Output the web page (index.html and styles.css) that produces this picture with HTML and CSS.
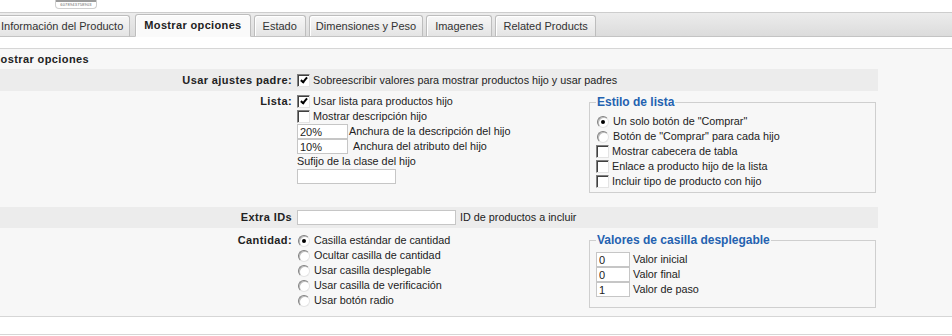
FILE: index.html
```html
<!DOCTYPE html>
<html lang="es">

<head>
  <meta charset="UTF-8">
  <meta name="viewport" content="width=device-width, initial-scale=1.0">
  <title>Mostrar opciones</title>
  <link rel="stylesheet" href="styles.css">
</head>

<body>
  <div class="logo"><span class="code">6078943758903</span></div>

  <div class="tabbar">
    <a class="tab tab-first">Información del Producto</a>
    <a class="tab tab-active">Mostrar opciones</a>
    <a class="tab">Estado</a>
    <a class="tab tab-narrow">Dimensiones y Peso</a>
    <a class="tab">Imagenes</a>
    <a class="tab tab-last">Related Products</a>
  </div>

  <div class="panel">
    <h3 class="panel-title">Mostrar opciones</h3>

    <div class="row row-shaded">
      <div class="label">Usar ajustes padre:</div>
      <div class="field">
        <label class="opt"><span class="cb on"></span>Sobreescribir valores para mostrar productos hijo y usar padres</label>
      </div>
    </div>

    <div class="row row-list">
      <div class="label">Lista:</div>
      <div class="field split">
        <div class="col">
          <label class="opt"><span class="cb on"></span>Usar lista para productos hijo</label>
          <label class="opt"><span class="cb"></span>Mostrar descripción hijo</label>
          <div class="opt"><input class="txt txt-pct" type="text" value="20%">Anchura de la descripción del hijo</div>
          <div class="opt"><input class="txt txt-pct" type="text" value="10%"><span class="sp">Anchura del atributo del hijo</span></div>
          <div class="opt">Sufijo de la clase del hijo</div>
          <div class="opt"><input class="txt txt-suffix" type="text" value=""></div>
        </div>
        <fieldset class="box box-style">
          <legend>Estilo de lista</legend>
          <label class="opt"><span class="rb on"></span>Un solo botón de "Comprar"</label>
          <label class="opt"><span class="rb"></span>Botón de "Comprar" para cada hijo</label>
          <label class="opt"><span class="cb"></span>Mostrar cabecera de tabla</label>
          <label class="opt"><span class="cb"></span>Enlace a producto hijo de la lista</label>
          <label class="opt"><span class="cb"></span>Incluir tipo de producto con hijo</label>
        </fieldset>
      </div>
    </div>

    <div class="row row-shaded row-ids">
      <div class="label">Extra IDs</div>
      <div class="field">
        <div class="opt"><input class="txt txt-ids" type="text" value=""><span class="hint">ID de productos a incluir</span></div>
      </div>
    </div>

    <div class="row row-qty">
      <div class="label">Cantidad:</div>
      <div class="field split">
        <div class="col">
          <label class="opt"><span class="rb on"></span>Casilla estándar de cantidad</label>
          <label class="opt"><span class="rb"></span>Ocultar casilla de cantidad</label>
          <label class="opt"><span class="rb"></span>Usar casilla desplegable</label>
          <label class="opt"><span class="rb"></span>Usar casilla de verificación</label>
          <label class="opt"><span class="rb"></span>Usar botón radio</label>
        </div>
        <fieldset class="box box-values">
          <legend>Valores de casilla desplegable</legend>
          <div class="opt"><input class="txt txt-num" type="text" value="0">Valor inicial</div>
          <div class="opt"><input class="txt txt-num" type="text" value="0">Valor final</div>
          <div class="opt"><input class="txt txt-num" type="text" value="1">Valor de paso</div>
        </fieldset>
      </div>
    </div>
  </div>

  <div class="footer-line"></div>
</body>

</html>
```

FILE: styles.css
```css
body {
  margin: 0;
  background: #fff;
  color: #222;
  font-family: "Liberation Sans", Arial, sans-serif;
  font-size: 10.8px;
  overflow: hidden;
}

/* logo fragment at the top */
.logo {
  width: 40px;
  height: 8px;
  margin-left: 55px;
  margin-bottom: 3px;
  border: 1px solid #cfcfcf;
  border-top: none;
  border-radius: 0 0 4px 4px;
  background: linear-gradient(#9a9a9a 0, #9a9a9a 2px, #fff 2px);
  text-align: center;
}

.logo .code {
  display: block;
  font-size: 4px;
  line-height: 6px;
  padding-top: 2px;
  color: #666;
  letter-spacing: 0.2px;
}

/* tabs */
.tabbar {
  height: 23px;
  border-top: 1px solid #cdcdcd;
  border-bottom: 1px solid #c4c4c4;
  background: linear-gradient(#ececec, #dcdcdc);
  display: flex;
  align-items: flex-end;
  gap: 3px;
}

.tab {
  height: 20px;
  line-height: 20px;
  padding: 0 8px;
  margin-bottom: -1px;
  border: 1px solid #bdbdbd;
  border-bottom-color: #c4c4c4;
  border-radius: 3px 3px 0 0;
  background: linear-gradient(#f7f7f7, #e4e4e4);
  box-shadow: inset 1px 1px 0 #fff;
  color: #333;
  font-size: 11px;
  white-space: nowrap;
}

.tab-first {
  margin-left: -8px;
  margin-right: 2px;
  padding-right: 6px;
}

.tab-narrow {
  padding: 0 6px;
}

.tab-last {
  padding: 0 7px;
}

.tab-active {
  background: #fafafa;
  border-bottom-color: #fafafa;
  font-weight: bold;
  letter-spacing: 0.35px;
  color: #222;
  height: 21px;
}

/* main panel */
.panel {
  margin-top: 11px;
  border-top: 1px solid #d6d6d6;
  border-bottom: 1px solid #d6d6d6;
  background: #f7f7f7;
  padding-bottom: 8px;
}

.panel-title {
  margin: 0 0 0 -9px;
  height: 20px;
  line-height: 20px;
  font-size: 11px;
  font-weight: bold;
  letter-spacing: 0.4px;
}

.row {
  display: flex;
  gap: 5px;
  width: 878px;
}

.row-shaded {
  background: #ececec;
  height: 22px;
  align-items: center;
}

.row-ids {
  height: 21px;
}

.label {
  width: 292px;
  flex: none;
  text-align: right;
  font-size: 11px;
  font-weight: bold;
  letter-spacing: 0.4px;
  line-height: 15px;
}

.row-list {
  padding: 3px 0 14px;
}

.row-qty {
  padding-top: 5px;
}

.split {
  display: flex;
}

.col {
  width: 292px;
  flex: none;
}

.opt {
  display: flex;
  align-items: center;
  height: 15px;
  line-height: 15px;
  white-space: nowrap;
}

.sp {
  margin-left: 4px;
}

.hint {
  margin-left: 4px;
}

/* classic form controls */
.cb {
  position: relative;
  width: 11px;
  height: 11px;
  margin-right: 3px;
  flex: none;
  background: #fff;
  border: 1px solid;
  border-color: #808080 #e4e4e4 #e4e4e4 #808080;
  box-shadow: inset 1px 1px 0 #404040;
}

.cb.on::after {
  content: '';
  position: absolute;
  left: 4px;
  top: 1px;
  width: 2px;
  height: 5px;
  border: solid #000;
  border-width: 0 2px 2px 0;
  transform: rotate(40deg);
}

.rb {
  position: relative;
  width: 10px;
  height: 10px;
  margin: 0 4px 0 1px;
  flex: none;
  border-radius: 50%;
  background: #fff;
  border: 1px solid;
  border-color: #808080 #e4e4e4 #e4e4e4 #808080;
  box-shadow: inset 1px 1px 0 #bbb;
}

.rb.on::after {
  content: '';
  position: absolute;
  left: 3px;
  top: 3px;
  width: 4px;
  height: 4px;
  border-radius: 50%;
  background: #000;
}

.txt {
  box-sizing: border-box;
  height: 15px;
  margin: 0;
  padding: 0 2px;
  border: 1px solid #c6c6c6;
  background: #fff;
  font-family: "Liberation Sans", Arial, sans-serif;
  font-size: 11px;
  color: #222;
  flex: none;
}

.txt-pct {
  width: 51px;
  margin-right: 1px;
}

.txt-suffix {
  width: 99px;
}

.txt-ids {
  width: 159px;
}

.txt-num {
  width: 34px;
  margin-right: 3px;
}

/* fieldsets */
.box {
  box-sizing: border-box;
  width: 287px;
  margin: 0;
  border: 1px solid #cfcfcf;
  padding: 5px 6px 3px;
}

.box legend {
  padding: 0 1px;
  color: #2462b0;
  font-size: 12px;
  font-weight: bold;
  line-height: 14px;
}

.box-style {
  margin-top: 1px;
}

.box-values {
  padding-bottom: 5px;
}

.footer-line {
  margin-top: 17px;
  border-top: 1px solid #d6d6d6;
}
```
